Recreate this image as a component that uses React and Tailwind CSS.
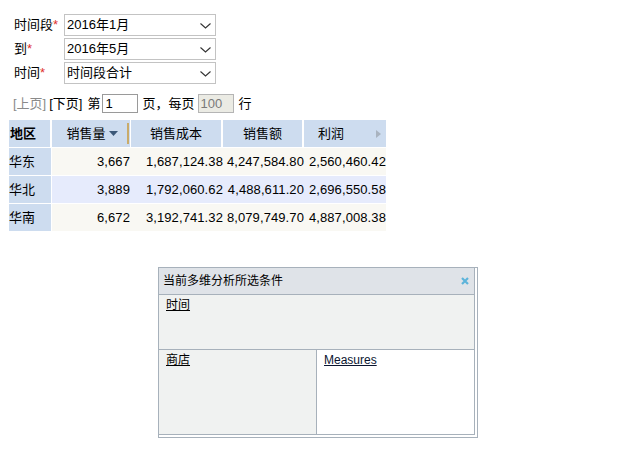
import React from 'react';

const Chevron = () => (
  <svg className="absolute right-[4px] top-[8px] w-[11px] h-[6px] pointer-events-none" viewBox="0 0 11 6" fill="none">
    <path d="M0.5 0.5 L5.5 5 L10.5 0.5" stroke="#333" strokeWidth="1.1" />
  </svg>
);

const FormRow = ({ label, value }) => (
  <div className="flex items-center h-[22px] mb-[2px]">
    <div className="w-[50px] text-[13px] text-black">
      {label}
      <span className="text-[#e0302b]">*</span>
    </div>
    <div className="relative w-[152px] h-[22px] border border-[#c3c3c3] bg-white">
      <div className="pl-[2px] leading-[20px] text-[13px] text-black">{value}</div>
      <Chevron />
    </div>
  </div>
);

const rows = [
  { area: '华东', qty: '3,667', cost: '1,687,124.38', sales: '4,247,584.80', profit: '2,560,460.42', bg: 'bg-[#f9f8f3]' },
  { area: '华北', qty: '3,889', cost: '1,792,060.62', sales: '4,488,611.20', profit: '2,696,550.58', bg: 'bg-[#e6ebfc]' },
  { area: '华南', qty: '6,672', cost: '3,192,741.32', sales: '8,079,749.70', profit: '4,887,008.38', bg: 'bg-[#f9f8f3]' },
];

const App = () => {
  return (
    <div className="w-[643px] h-[469px] bg-white font-['Liberation_Sans','Noto_Sans_CJK_SC',sans-serif] text-black overflow-hidden">
      {/* Filters */}
      <div className="pt-[14px] pl-[14px]">
        <FormRow label="时间段" value="2016年1月" />
        <FormRow label="到" value="2016年5月" />
        <FormRow label="时间" value="时间段合计" />
      </div>

      {/* Pager */}
      <div className="flex items-center h-[19px] mt-[10px] pl-[13px] text-[13px]">
        <span className="text-[#8a8a8a]">[上页]</span>
        <span className="ml-[3px]">[下页]</span>
        <span className="ml-[5px]">第</span>
        <div className="ml-[2px] w-[36px] h-[19px] border border-[#9a9a9a] bg-white pl-[2px] leading-[17px]">1</div>
        <span className="ml-[4px]">页，每页</span>
        <div className="ml-[3px] w-[36px] h-[19px] border border-[#b5b5b5] bg-[#ebebe4] pl-[2px] leading-[17px] text-[#7a7a7a]">100</div>
        <span className="ml-[5px]">行</span>
      </div>

      {/* Table */}
      <div className="ml-[9px] mt-[7px] w-[377px] text-[13px]">
        <div className="flex h-[28px] border-b border-white">
          <div className="w-[43px] bg-[#cddcef] border-r-2 border-white font-bold leading-[28px] pl-[1px]">地区</div>
          <div className="relative w-[79px] bg-[#cddcef] border-r border-white flex items-center justify-center pl-[2px]">
            <span>销售量</span>
            <svg className="ml-[3px] w-[9px] h-[5px]" viewBox="0 0 9 5">
              <path d="M0 0 H9 L4.5 5 Z" fill="#3b5878" />
            </svg>
            <div className="absolute right-[1px] top-[3px] w-[2px] h-[21px] bg-[#c9ab6a]" />
          </div>
          <div className="w-[92px] bg-[#cddcef] border-r-2 border-white flex items-center justify-center">销售成本</div>
          <div className="w-[81px] bg-[#cddcef] border-r-2 border-white flex items-center justify-center">销售额</div>
          <div className="relative w-[82px] bg-[#cddcef] flex items-center pl-[14px]">
            <span>利润</span>
            <svg className="absolute right-[5px] top-[10px] w-[5px] h-[8px]" viewBox="0 0 5 8">
              <path d="M0 0 L5 4 L0 8 Z" fill="#a9b3bf" />
            </svg>
          </div>
        </div>
        {rows.map((r) => (
          <div key={r.area} className={`flex h-[28px] border-b border-white ${r.bg}`}>
            <div className="w-[43px] bg-[#cddcef] border-r border-white leading-[28px]">{r.area}</div>
            <div className="w-[79px] text-right pr-[1px] leading-[28px] tracking-[0.1px]">{r.qty}</div>
            <div className="w-[92px] text-right leading-[28px] tracking-[0.1px]">{r.cost}</div>
            <div className="w-[81px] text-right leading-[28px] tracking-[0.1px]">{r.sales}</div>
            <div className="w-[82px] text-right leading-[28px] tracking-[0.1px]">{r.profit}</div>
          </div>
        ))}
      </div>

      {/* Selected conditions panel */}
      <div className="ml-[158px] mt-[35px] w-[320px] border border-[#a7b1bb] pr-[2px] pb-[2px] bg-white">
        <div className="border-r border-b border-[#a7b1bb]">
          <div className="flex items-center justify-between h-[27px] bg-[#dfe3e8] border-b border-[#a7b1bb] pl-[4px] pr-[5px] text-[12px]">
            <span>当前多维分析所选条件</span>
            <svg className="w-[8px] h-[8px]" viewBox="0 0 8 8">
              <path d="M1 1 L7 7 M7 1 L1 7" stroke="#5db4da" strokeWidth="2.2" />
            </svg>
          </div>
          <div className="h-[55px] bg-[#f0f2f1] border-b border-[#a7b1bb] pl-[7px] pt-[1px] text-[12px]">
            <span className="underline">时间</span>
          </div>
          <div className="flex h-[84px] text-[12px]">
            <div className="w-[158px] bg-[#f0f2f1] border-r border-[#a7b1bb] pl-[7px] pt-[1px]">
              <span className="underline">商店</span>
            </div>
            <div className="flex-1 bg-white pl-[7px] pt-[1px]">
              <span className="underline text-[#0a1530]">Measures</span>
            </div>
          </div>
        </div>
      </div>
    </div>
  );
};

export default App;
